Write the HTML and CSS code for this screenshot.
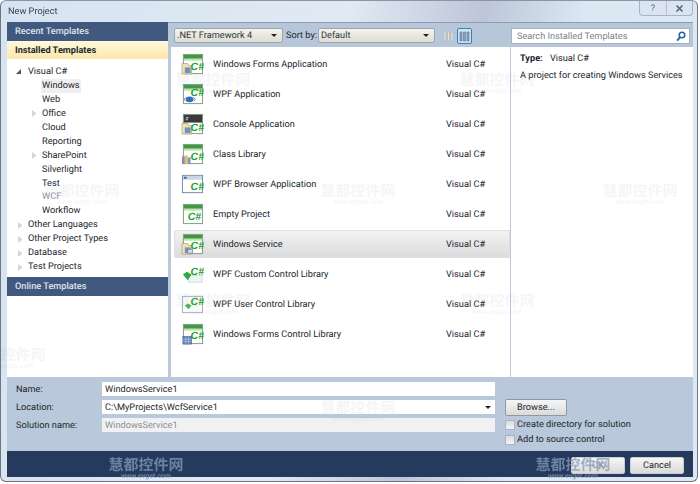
FILE: index.html
```html
<!DOCTYPE html>
<html lang="en">
<head>
    <meta charset="UTF-8">
    <title>New Project</title>
    <link rel="stylesheet" href="styles.css">
</head>
<body>
    <svg class="defs" width="0" height="0">
        <symbol id="ic-base" viewBox="0 0 24 24">
            <rect x="2.5" y="1.5" width="20" height="20" fill="#fff" stroke="#7f9a86"/>
            <rect x="3" y="2" width="19" height="4" fill="#3f9a3f"/>
            <rect x="3" y="6" width="19" height="2" fill="#bfe3b0"/>
        </symbol>
        <symbol id="ic-form" viewBox="0 0 24 24">
            <path d="M1 11h6l1 2h3v9H1z" fill="#efe2b0" stroke="#a89a70" stroke-width=".7"/>
            <rect x="4" y="15" width="6" height="6" fill="#6d93c4"/>
        </symbol>
    </svg>

    <div class="window">
        <div class="titlebar">
            <span class="title">New Project</span>
            <div class="capbtns">
                <span class="capbtn">?</span>
                <span class="capbtn">
                    <svg width="9" height="9" viewBox="0 0 9 9"><path d="M1.5 1.5l6 6M7.5 1.5l-6 6" stroke="#55677c" stroke-width="1.6" fill="none"/></svg>
                </span>
            </div>
        </div>

        <div class="dialog">
            <div class="main">
                <div class="side">
                    <div class="side-head">Recent Templates</div>
                    <div class="side-head active">Installed Templates</div>
                    <ul class="tree">
                        <li><i class="arrow open"></i>Visual C#</li>
                        <li class="sub sel"><i class="arrow none"></i><span>Windows</span></li>
                        <li class="sub"><i class="arrow none"></i>Web</li>
                        <li class="sub"><i class="arrow"></i>Office</li>
                        <li class="sub"><i class="arrow none"></i>Cloud</li>
                        <li class="sub"><i class="arrow none"></i>Reporting</li>
                        <li class="sub"><i class="arrow"></i>SharePoint</li>
                        <li class="sub"><i class="arrow none"></i>Silverlight</li>
                        <li class="sub"><i class="arrow none"></i>Test</li>
                        <li class="sub muted"><i class="arrow none"></i>WCF</li>
                        <li class="sub"><i class="arrow none"></i>Workflow</li>
                        <li><i class="arrow"></i>Other Languages</li>
                        <li><i class="arrow"></i>Other Project Types</li>
                        <li><i class="arrow"></i>Database</li>
                        <li><i class="arrow"></i>Test Projects</li>
                    </ul>
                    <div class="side-head">Online Templates</div>
                    <div class="side-fill"></div>
                </div>

                <div class="content">
                    <div class="toolbar">
                        <div class="combo fw"><span>.NET Framework 4</span><i class="caret"></i></div>
                        <span class="sortby">Sort by:</span>
                        <div class="combo sort"><span>Default</span><i class="caret"></i></div>
                        <span class="viewbtn">
                            <svg width="11" height="11" viewBox="0 0 11 11"><path d="M1 1h2v9H1zM4.5 1h2v9h-2zM8 1h2v9H8z" fill="#e8e4d2" stroke="#a9b4bf" stroke-width=".6"/></svg>
                        </span>
                        <span class="viewbtn on">
                            <svg width="11" height="11" viewBox="0 0 11 11"><path d="M1 1h2v9H1zM4.5 1h2v9h-2zM8 1h2v9H8z" fill="#8aa4c0" stroke="#5c7795" stroke-width=".6"/></svg>
                        </span>
                        <div class="search">
                            <span>Search Installed Templates</span>
                            <svg width="10" height="11" viewBox="0 0 10 11"><circle cx="6" cy="4" r="2.8" fill="none" stroke="#1f62a8" stroke-width="1.5"/><path d="M4 6.2L1.2 9.6" stroke="#1f62a8" stroke-width="1.9"/></svg>
                        </div>
                    </div>

                    <div class="panes">
                        <div class="list">
                            <div class="row">
                                <svg class="icon" viewBox="0 0 24 24"><use href="#ic-base"/><use href="#ic-form"/><text x="10" y="18" class="csharp">C#</text></svg>
                                <span class="name">Windows Forms Application</span><span class="lang">Visual C#</span>
                            </div>
                            <div class="row">
                                <svg class="icon" viewBox="0 0 24 24"><use href="#ic-base"/><text x="10" y="14" class="csharp">C#</text><ellipse cx="9" cy="17" rx="4" ry="3" fill="#2d6fc0"/><path d="M3 17l2-2M3 17l2 2M15 17l-2-2M15 17l-2 2" stroke="#6b7a88" fill="none"/></svg>
                                <span class="name">WPF Application</span><span class="lang">Visual C#</span>
                            </div>
                            <div class="row">
                                <svg class="icon" viewBox="0 0 24 24"><use href="#ic-base"/><rect x="3" y="2" width="19" height="8" fill="#3a3a3a"/><path d="M5 5h3M5 7h2" stroke="#ddd"/><use href="#ic-form"/><text x="10" y="19" class="csharp">C#</text></svg>
                                <span class="name">Console Application</span><span class="lang">Visual C#</span>
                            </div>
                            <div class="row">
                                <svg class="icon" viewBox="0 0 24 24"><use href="#ic-base"/><path d="M1 14h3v8H1z" fill="#8f86c0"/><path d="M4 13h3v9H4z" fill="#d9c36a"/><path d="M7 15h3v7H7z" fill="#7f9ac4"/><text x="10" y="18" class="csharp">C#</text></svg>
                                <span class="name">Class Library</span><span class="lang">Visual C#</span>
                            </div>
                            <div class="row">
                                <svg class="icon" viewBox="0 0 24 24"><rect x="1.5" y="2.5" width="21" height="18" fill="#fff" stroke="#77889a"/><rect x="2" y="3" width="20" height="4" fill="#c8d6e6"/><rect x="3" y="4" width="3" height="2" fill="#3a6fb0"/><text x="10" y="18" class="csharp">C#</text></svg>
                                <span class="name">WPF Browser Application</span><span class="lang">Visual C#</span>
                            </div>
                            <div class="row">
                                <svg class="icon" viewBox="0 0 24 24"><use href="#ic-base"/><text x="7" y="18" class="csharp">C#</text></svg>
                                <span class="name">Empty Project</span><span class="lang">Visual C#</span>
                            </div>
                            <div class="row hot">
                                <svg class="icon" viewBox="0 0 24 24"><use href="#ic-base"/><use href="#ic-form"/><rect x="7" y="17" width="5" height="4" fill="#d8dfe8" stroke="#64788f" stroke-width=".7"/><text x="10" y="17" class="csharp">C#</text></svg>
                                <span class="name">Windows Service</span><span class="lang">Visual C#</span>
                            </div>
                            <div class="row">
                                <svg class="icon" viewBox="0 0 24 24"><rect x="8" y="13" width="14" height="7" fill="#eef6f2" stroke="#b5d5d0" stroke-width=".7"/><text x="10" y="13" class="csharp">C#</text><path d="M2 12l4-3 5 3-4 6z" fill="#2fa84a"/></svg>
                                <span class="name">WPF Custom Control Library</span><span class="lang">Visual C#</span>
                            </div>
                            <div class="row">
                                <svg class="icon" viewBox="0 0 24 24"><rect x="1.5" y="3.5" width="21" height="17" fill="#fbfdfb" stroke="#a3adb5"/><text x="10" y="13" class="csharp">C#</text><path d="M4 13l3-2 4 2-3 4z" fill="#45b860"/></svg>
                                <span class="name">WPF User Control Library</span><span class="lang">Visual C#</span>
                            </div>
                            <div class="row">
                                <svg class="icon" viewBox="0 0 24 24"><use href="#ic-base"/><text x="10" y="17" class="csharp">C#</text><rect x="2" y="14" width="9" height="8" fill="#5b7fb8" stroke="#39557f" stroke-width=".6"/><path d="M2 17h9M2 19.5h9M5 14v8M8 14v8" stroke="#cfdcef" stroke-width=".6"/></svg>
                                <span class="name">Windows Forms Control Library</span><span class="lang">Visual C#</span>
                            </div>
                        </div>
                        <div class="info">
                            <p class="type"><b>Type:</b> Visual C#</p>
                            <p>A project for creating Windows Services</p>
                        </div>
                    </div>
                </div>
            </div>

            <div class="form">
                <div class="fields">
                    <label>Name:</label>
                    <div class="input">WindowsService1</div>
                    <label>Location:</label>
                    <div class="input">C:\MyProjects\WcfService1<i class="caret"></i></div>
                    <label>Solution name:</label>
                    <div class="input off">WindowsService1</div>
                </div>
                <div class="opts">
                    <span class="btn browse">Browse...</span>
                    <div class="check"><i></i>Create directory for solution</div>
                    <div class="check"><i></i>Add to source control</div>
                </div>
            </div>

            <div class="footer">
                <span class="btn action dim">OK</span>
                <span class="btn action">Cancel</span>
            </div>
        </div>
    </div>

    <!-- site watermarks stamped across the screenshot -->
    <div class="mark" style="left:175px;top:72px">慧都控件网<small>www.evget.com</small></div>
    <div class="mark" style="left:459px;top:72px">慧都控件网<small>www.evget.com</small></div>
    <div class="mark" style="left:44px;top:183px">慧都控件网<small>www.evget.com</small></div>
    <div class="mark" style="left:320px;top:183px">慧都控件网<small>www.evget.com</small></div>
    <div class="mark" style="left:602px;top:183px">慧都控件网<small>www.evget.com</small></div>
    <div class="mark" style="left:175px;top:293px">慧都控件网<small>www.evget.com</small></div>
    <div class="mark" style="left:459px;top:293px">慧都控件网<small>www.evget.com</small></div>
    <div class="mark" style="left:-30px;top:347px">慧都控件网<small>www.evget.com</small></div>
    <div class="mark" style="left:320px;top:400px">慧都控件网<small>www.evget.com</small></div>
    <div class="mark strong" style="left:108px;top:457px">慧都控件网<small>www.evget.com</small></div>
    <div class="mark strong" style="left:535px;top:457px">慧都控件网<small>www.evget.com</small></div>
</body>
</html>
```

FILE: styles.css
```css
* {
    box-sizing: border-box;
}
html, body {
    margin: 0;
    height: 484px;
    overflow: hidden;
}
body {
    position: relative;
    font-family: Roboto, "Noto Sans CJK SC", sans-serif;
    font-size: 9.2px;
    text-rendering: geometricPrecision;
    color: #22262c;
    background: #fff;
}
.defs {
    position: absolute;
}
.csharp {
    font-family: "Liberation Sans", sans-serif;
    font-size: 11px;
    font-weight: bold;
    font-style: italic;
    fill: #1fa32e;
}
i {
    font-style: normal;
}

.window {
    width: 698px;
    height: 482px;
    display: flex;
    flex-direction: column;
    padding: 0 4px 4px 6px;
    border: 1px solid #6d7681;
    border-top-color: #8f959c;
    border-radius: 6px;
    background: linear-gradient(100deg, #d6e3f1 0%, #e0eaf5 45%, #bcc6d8 62%, #dbe7f3 75%, #dce8f4 100%);
    filter: blur(.3px);
}
.titlebar {
    height: 21px;
    flex: none;
    display: flex;
    justify-content: space-between;
}
.title {
    padding: 5px 0 0 1px;
    color: #3a3f46;
}
.capbtns {
    display: flex;
    height: 15px;
    border: 1px solid #a5b3c4;
    border-top: none;
    border-radius: 0 0 4px 4px;
    background: #dae5f1;
}
.capbtn {
    width: 26px;
    display: flex;
    align-items: center;
    justify-content: center;
    color: #55677c;
}
.capbtn + .capbtn {
    border-left: 1px solid #b3c0cf;
}

.dialog {
    flex: 1;
    display: flex;
    flex-direction: column;
    background: #b9c8da;
}
.main {
    height: 355px;
    flex: none;
    display: flex;
}
.side {
    width: 161px;
    flex: none;
    display: flex;
    flex-direction: column;
    background: #fff;
}
.side-head {
    height: 19px;
    flex: none;
    padding: 4px 8px 0;
    color: #dfe5ee;
    font-weight: 500;
    background: #41597f;
}
.side-head.active {
    height: 18px;
    color: #23272d;
    font-weight: 700;
    background: linear-gradient(#fff9dc, #fde6ac);
}
.tree {
    list-style: none;
    margin: 0;
    padding: 6px 0 0 9px;
    height: 218px;
    flex: none;
}
.tree li {
    height: 13.95px;
    line-height: 13.95px;
    display: flex;
    align-items: center;
}
.tree .sub {
    padding-left: 14px;
}
.tree .sel span {
    background: #efefef;
    padding: 0 1px;
    margin-left: -1px;
}
.tree .muted {
    color: #8a8f96;
}
.arrow {
    width: 0;
    height: 7px;
    flex: none;
    border-left: 4px solid #d2d6da;
    border-top: 3.5px solid transparent;
    border-bottom: 3.5px solid transparent;
    margin: 0 6px 0 2px;
}
.arrow.open {
    height: 0;
    border-top: 0;
    border-bottom: 5px solid #555;
    border-left: 5px solid transparent;
    margin: 0 7px 0 0;
}
.arrow.none {
    border-color: transparent;
    border-left-width: 0;
    margin: 0 12px 0 0;
}
.side-fill {
    flex: 1;
}

.content {
    flex: 1;
    min-width: 0;
    display: flex;
    flex-direction: column;
}
.toolbar {
    height: 25px;
    flex: none;
    display: flex;
    align-items: flex-start;
    padding: 5px 3px 0 6px;
    border-top: 1px solid #8d9cb0;
    background: #b7c6d9;
}
.combo {
    height: 15px;
    flex: none;
    display: flex;
    align-items: center;
    justify-content: space-between;
    padding: 0 5px 0 2px;
    border: 1px solid #9aa6b5;
    border-radius: 2px;
    color: #30353c;
    background: linear-gradient(#f4f4ee, #dcdccf);
}
.fw {
    width: 109px;
}
.sort {
    width: 117px;
}
.sortby {
    width: 35px;
    flex: none;
    padding-left: 3px;
    line-height: 15px;
    white-space: nowrap;
}
.caret {
    width: 0;
    height: 0;
    border-left: 3px solid transparent;
    border-right: 3px solid transparent;
    border-top: 3px solid #222;
}
.viewbtn {
    width: 15px;
    height: 16px;
    flex: none;
    margin-left: 1px;
    display: flex;
    align-items: center;
    justify-content: center;
}
.sort + .viewbtn {
    margin-left: 6px;
}
.viewbtn.on {
    border: 1px solid #3d80b8;
    border-radius: 2px;
    background: #cfe0ef;
}
.search {
    width: 179px;
    height: 16px;
    margin-left: auto;
    display: flex;
    align-items: center;
    justify-content: space-between;
    padding: 0 3px 0 5px;
    color: #7d828a;
    border: 1px solid #a4b2c2;
    background: #fff;
}

.panes {
    flex: 1;
    display: flex;
    padding-left: 3px;
    gap: 1px;
}
.list {
    width: 339px;
    flex: none;
    padding: 3px 0 0 3px;
    display: flex;
    flex-direction: column;
    gap: 2px;
    background: #fff;
}
.row {
    height: 28px;
    flex: none;
    display: flex;
    align-items: center;
    padding-left: 7px;
}
.row.hot {
    border-radius: 2px 0 0 2px;
    border: 1px solid #e0e0e0;
    padding-left: 6px;
    background: linear-gradient(#f2f2f2, #dcdcdc);
}
.icon {
    width: 23px;
    height: 23px;
    flex: none;
    margin-right: 9px;
}
.name {
    width: 233px;
    flex: none;
    padding-top: 1px;
    white-space: nowrap;
}
.lang {
    padding-top: 1px;
    white-space: nowrap;
}
.info {
    flex: 1;
    min-width: 0;
    padding: 5px 9px;
    background: #fff;
}
.info p {
    margin: 0;
    line-height: 13px;
    white-space: nowrap;
}
.info .type {
    margin-bottom: 4px;
}
.info b {
    margin-right: 5px;
}

.form {
    height: 74px;
    flex: none;
    display: flex;
    padding-left: 9px;
}
.fields {
    display: grid;
    grid-template-columns: 86px 393px;
    grid-auto-rows: 14px;
    row-gap: 4px;
    align-items: center;
    padding-top: 5px;
}
.fields label {
    padding-top: 1px;
}
.input {
    height: 14px;
    display: flex;
    align-items: center;
    justify-content: space-between;
    padding: 1px 4px 0 3px;
    background: #fff;
}
.input.off {
    color: #8b8f95;
    background: #f0f1f2;
}
.opts {
    margin-left: 10px;
    padding-top: 22px;
    display: flex;
    flex-direction: column;
}
.btn {
    flex: none;
    display: flex;
    align-items: center;
    justify-content: center;
    border: 1px solid #8e99a6;
    border-radius: 2px;
    background: linear-gradient(#f6f6f6, #dadada);
}
.browse {
    width: 62px;
    height: 17px;
    margin-bottom: 1px;
}
.check {
    height: 15px;
    flex: none;
    display: flex;
    align-items: center;
    gap: 2px;
    white-space: nowrap;
}
.check i {
    width: 10px;
    height: 10px;
    border: 1px solid #aab4c0;
    background: linear-gradient(#d8dde3, #f2f3f5);
}

.footer {
    flex: 1;
    display: flex;
    justify-content: flex-end;
    gap: 5px;
    padding: 6px 9px 0 0;
    background: #253a5c;
}
.action {
    width: 54px;
    height: 17px;
    border-color: #c9ced6;
}
.dim {
    color: #8b8f95;
}

.mark {
    position: absolute;
    width: 76px;
    text-align: center;
    font-size: 15px;
    line-height: 16px;
    font-weight: 700;
    white-space: nowrap;
    color: rgba(150, 160, 175, .1);
    pointer-events: none;
}
.mark small {
    display: block;
    font-size: 7px;
    line-height: 7px;
}
.mark.strong {
    color: rgba(135, 155, 185, .75);
}
```
